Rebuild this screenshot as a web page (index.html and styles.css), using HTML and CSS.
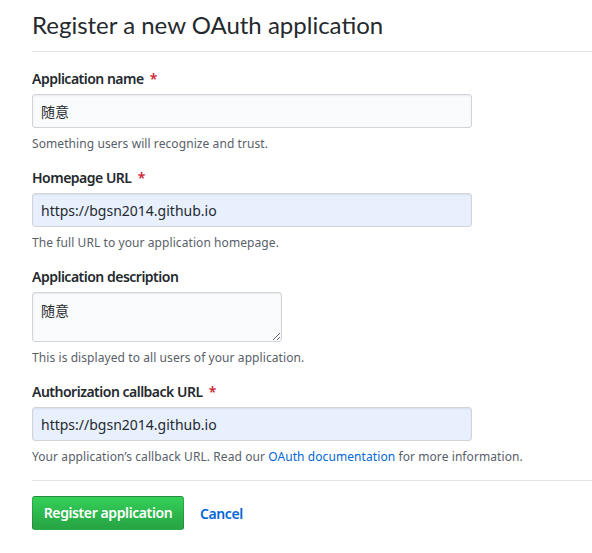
FILE: index.html
```html
<!DOCTYPE html>
<html lang="zh">
<head>
<meta charset="utf-8">
<title>Register a new OAuth application</title>
<link rel="stylesheet" href="styles.css">
</head>
<body>
<div class="page">
  <div class="subhead">
    <h2 class="subhead-heading">Register a new OAuth application</h2>
  </div>
  <form class="form">
    <dl class="form-group">
      <dt><label>Application name <span class="req">*</span></label></dt>
      <dd>
        <input class="form-control" type="text" value="随意">
        <p class="note">Something users will recognize and trust.</p>
      </dd>
    </dl>
    <dl class="form-group">
      <dt><label>Homepage URL <span class="req">*</span></label></dt>
      <dd>
        <input class="form-control autofill" type="text" value="https://bgsn2014.github.io">
        <p class="note">The full URL to your application homepage.</p>
      </dd>
    </dl>
    <dl class="form-group">
      <dt><label>Application description</label></dt>
      <dd>
        <textarea class="form-control short">随意</textarea>
        <p class="note">This is displayed to all users of your application.</p>
      </dd>
    </dl>
    <dl class="form-group">
      <dt><label>Authorization callback URL <span class="req">*</span></label></dt>
      <dd>
        <input class="form-control autofill" type="text" value="https://bgsn2014.github.io">
        <p class="note">Your application’s callback URL. Read our <a href="#">OAuth documentation</a> for more information.</p>
      </dd>
    </dl>
    <hr class="divider">
    <div class="actions">
      <button type="button" class="btn-primary">Register application</button>
      <a href="#" class="btn-link">Cancel</a>
    </div>
  </form>
</div>
</body>
</html>
```
FILE: styles.css
```css
html, body {
  margin: 0;
  padding: 0;
  background: #fff;
}
body {
  font-family: "Noto Sans", "Noto Sans CJK SC", sans-serif;
  font-size: 14px;
  line-height: 1.5;
  color: #24292e;
}
.page {
  padding: 7px 0 0 32px;
}
.subhead {
  border-bottom: 1px solid #e1e4e8;
  padding-bottom: 8px;
  margin-bottom: 16px;
}
.subhead-heading {
  margin: 0;
  font-family: Lato, "Noto Sans", sans-serif;
  font-size: 24px;
  font-weight: 400;
  line-height: 36px;
  color: #24292e;
}
.form-group {
  margin: 0 0 14px 0;
}
.form-group dt {
  margin: 0 0 5px 0;
}
.form-group dt label {
  font-weight: 600;
  font-size: 14px;
  line-height: 21px;
  letter-spacing: -0.5px;
}
.req {
  color: #cb2431;
  margin-left: 3px;
}
.form-group dd {
  margin: 0;
}
.form-control {
  display: block;
  box-sizing: border-box;
  width: 440px;
  height: 34px;
  padding: 6px 8px;
  font-family: "Noto Sans", "Noto Sans CJK SC", sans-serif;
  font-size: 14px;
  line-height: 20px;
  color: #24292e;
  background: #fafbfc;
  border: 1px solid #d1d5da;
  border-radius: 3px;
  box-shadow: inset 0 1px 2px rgba(27,31,35,.075);
  outline: none;
  margin: 0;
}
.form-control.autofill {
  background: #e8f0fe;
}
textarea.form-control.short {
  width: 250px;
  height: 50px;
  resize: vertical;
  padding: 8px 8px;
}
.note {
  margin: 7px 0 0 0;
  font-size: 12px;
  line-height: 18px;
  letter-spacing: 0.08px;
  color: #586069;
}
.note a {
  color: #0366d6;
  text-decoration: none;
}
.divider {
  height: 0;
  margin: 11px 0 15px 0;
  border: 0;
  border-top: 1px solid #e1e4e8;
}
.actions {
  display: flex;
  align-items: center;
  gap: 16px;
}
.btn-primary {
  box-sizing: border-box;
  height: 34px;
  width: 152px;
  padding: 0 8px;
  white-space: nowrap;
  font-family: "Noto Sans", sans-serif;
  font-size: 14px;
  font-weight: 600;
  letter-spacing: -0.4px;
  line-height: 20px;
  color: #fff;
  background: linear-gradient(-180deg, #34d058 0%, #28a745 90%);
  border: 1px solid rgba(27,31,35,.2);
  border-radius: 3px;
}
.btn-link {
  font-size: 14px;
  font-weight: 600;
  letter-spacing: -0.4px;
  color: #0366d6;
  text-decoration: none;
}
```
